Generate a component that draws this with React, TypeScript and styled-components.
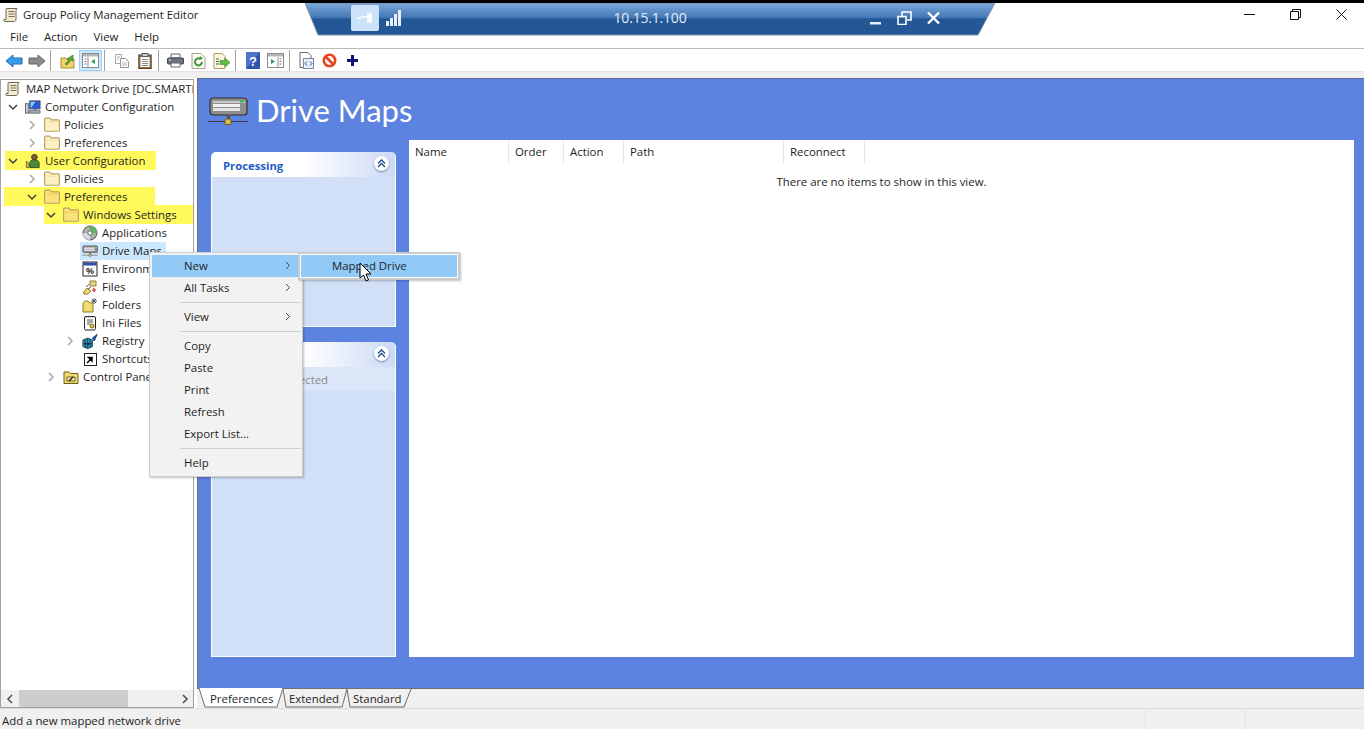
import React from 'react'
import styled, { createGlobalStyle } from 'styled-components'

const UI_FONT = `"Open Sans", "Noto Sans", sans-serif`

const GlobalStyle = createGlobalStyle`
    html, body {
        margin: 0;
        padding: 0;
        background: #fff;
    }
    * {
        box-sizing: border-box;
    }
`

const Page = styled.div`
    position: relative;
    display: flex;
    flex-direction: column;
    width: 1364px;
    height: 729px;
    overflow: hidden;
    background: #fff;
    border-top: 3px solid #000;
    font-family: ${UI_FONT};
    font-size: 11.4px;
    color: #1e1e1e;
`

/* ---------- window chrome ---------- */

const TitleBar = styled.div`
    display: flex;
    align-items: center;
    gap: 4px;
    height: 23px;
    padding-left: 3px;
    flex-shrink: 0;
`

const WindowControls = styled.div`
    position: absolute;
    top: 0;
    right: 0;
    display: flex;
`

const WindowButton = styled.div`
    display: flex;
    align-items: center;
    justify-content: center;
    width: 46px;
    height: 22px;
`

const MenuBar = styled.div`
    display: flex;
    align-items: center;
    gap: 16px;
    height: 23px;
    padding: 0 0 1px 10px;
    border-bottom: 1px solid #b9b9b9;
    flex-shrink: 0;
`

const Toolbar = styled.div`
    display: flex;
    align-items: flex-end;
    height: 22px;
    padding-left: 2px;
    flex-shrink: 0;
`

const ToolButton = styled.div<{ $active?: boolean }>`
    display: flex;
    align-items: center;
    justify-content: center;
    width: 23px;
    height: 21px;
    background: ${p => (p.$active ? '#cce8ff' : 'transparent')};
    border: 1px solid ${p => (p.$active ? '#99d1ff' : 'transparent')};
`

const ToolSep = styled.div`
    width: 8px;
    height: 21px;
    flex-shrink: 0;
    &::after {
        content: '';
        display: block;
        width: 1px;
        height: 100%;
        margin-left: 2px;
        background: #a0a0a0;
    }
`

const Band = styled.div`
    height: 7px;
    background: #f0f0f0;
    border-top: 1px solid #e3e3e3;
    flex-shrink: 0;
`

/* ---------- remote desktop connection bar ---------- */

const ConnectionBar = styled.div`
    position: absolute;
    top: 0;
    left: 305px;
    display: grid;
    grid-template-columns: 1fr auto 1fr;
    align-items: center;
    width: 690px;
    height: 33px;
    padding: 1px 46px 5px 46px;
    color: #e3ebf6;
    z-index: 5;
`

const BarShape = styled.svg`
    position: absolute;
    top: 0;
    left: 0;
`

const BarLeft = styled.div`
    position: relative;
    display: flex;
    align-items: center;
    gap: 7px;
`

const PinButton = styled.div`
    display: flex;
    align-items: center;
    justify-content: center;
    width: 28px;
    height: 26px;
    background: #cbe2fb;
    border-radius: 2px;
`

const HostName = styled.div`
    position: relative;
    font-size: 14px;
    letter-spacing: -0.2px;
`

const BarRight = styled.div`
    position: relative;
    display: flex;
    justify-content: flex-end;
    align-items: center;
    gap: 14px;
    padding-right: 8px;
`

/* ---------- main area ---------- */

const Main = styled.div`
    display: flex;
    flex: 1;
    min-height: 0;
`

const LeftPane = styled.div`
    display: flex;
    flex-direction: column;
    width: 194px;
    margin-top: 1px;
    border: 1px solid #a0a0a0;
    background: #fff;
    flex-shrink: 0;
`

const Tree = styled.div`
    position: relative;
    isolation: isolate;
    flex: 1;
    overflow: hidden;
    background: #fff;
    white-space: nowrap;
`

const Row = styled.div<{ $depth: number; $mark?: [number, number] }>`
    position: relative;
    display: flex;
    align-items: center;
    height: 18px;
    padding-left: ${p => (p.$depth === 0 ? 4 : 5 + (p.$depth - 1) * 19)}px;
    ${p =>
        p.$mark
            ? `&::before {
                content: '';
                position: absolute;
                z-index: -1;
                top: -1px;
                bottom: 0;
                left: ${p.$mark[0]}px;
                width: ${p.$mark[1]}px;
                background: #fff95c;
            }`
            : ''}
`

const Twist = styled.div`
    display: flex;
    align-items: center;
    justify-content: center;
    width: 14px;
    height: 18px;
    margin-right: 5px;
    flex-shrink: 0;
`

const Node = styled.div<{ $selected?: boolean; $root?: boolean }>`
    display: flex;
    align-items: center;
    gap: ${p => (p.$root ? 5 : 4)}px;
    height: 18px;
    margin-left: ${p => (p.$selected ? -2 : 0)}px;
    padding: ${p => (p.$selected ? '0 4px 0 2px' : '0')};
    background: ${p => (p.$selected ? '#cce8ff' : 'transparent')};
`

const NodeLabel = styled.span`
    margin-bottom: 2px;
`

const HScroll = styled.div`
    display: flex;
    align-items: center;
    height: 17px;
    background: #f0f0f0;
    flex-shrink: 0;
`

const ScrollArrow = styled.div`
    display: flex;
    align-items: center;
    justify-content: center;
    width: 17px;
    height: 17px;
`

const ScrollTrack = styled.div`
    flex: 1;
    height: 17px;
`

const ScrollThumb = styled.div`
    width: 109px;
    height: 17px;
    margin-left: 1px;
    background: #cdcdcd;
`

const RightPane = styled.div`
    display: flex;
    flex-direction: column;
    flex: 1;
    min-width: 0;
    margin-left: 3px;
`

const BluePanel = styled.div`
    display: flex;
    flex-direction: column;
    flex: 1;
    min-height: 0;
    background: #5c83df;
    border-top: 1px solid #5a6a90;
    border-left: 1px solid #6d6d6d;
    padding: 0 10px 31px 13px;
`

const Heading = styled.div`
    display: flex;
    align-items: center;
    gap: 8px;
    height: 61px;
    margin-left: -3px;
    flex-shrink: 0;
`

const HeadingIcon = styled.div`
    display: flex;
    margin-top: 2px;
`

const HeadingText = styled.h1`
    margin: 0;
    font-family: Lato, "Open Sans", sans-serif;
    font-size: 31px;
    font-weight: 400;
    color: #fff;
`

const Columns = styled.div`
    display: flex;
    flex: 1;
    min-height: 0;
    gap: 13px;
`

const TaskColumn = styled.div`
    display: flex;
    flex-direction: column;
    gap: 15px;
    width: 185px;
    padding-top: 12px;
    flex-shrink: 0;
`

const TaskCard = styled.div<{ $grow?: boolean }>`
    display: flex;
    flex-direction: column;
    flex: ${p => (p.$grow ? 1 : 'none')};
    height: ${p => (p.$grow ? 'auto' : '175px')};
    background: #d1dff7;
    border: solid #fff;
    border-width: 0 1px 1px 1px;
    border-radius: 5px 5px 0 0;
`

const TaskHeader = styled.div`
    display: flex;
    align-items: center;
    justify-content: space-between;
    height: 25px;
    padding: 2px 6px 0 11px;
    background: linear-gradient(90deg, #fff 0%, #fff 50%, #cbdaf5 100%);
    border-radius: 5px 5px 0 0;
    font-size: 11.3px;
    font-weight: 700;
    color: #215dc6;
    flex-shrink: 0;
`

const Collapse = styled.div`
    display: flex;
    align-items: center;
    justify-content: center;
    width: 15px;
    height: 15px;
    margin-top: -4px;
    background: #fff;
    border-radius: 50%;
    box-shadow: 0 1px 2px rgba(40, 60, 110, 0.55);
`

const TaskNote = styled.div`
    display: flex;
    align-items: center;
    height: 24px;
    padding-left: 11px;
    background: #dbe6f8;
    color: #8b8b8b;
`

const ListView = styled.div`
    flex: 1;
    min-width: 0;
    background: #fff;
`

const ListHeader = styled.div`
    display: flex;
    height: 24px;
`

const ColumnHead = styled.div<{ $w: number }>`
    display: flex;
    align-items: center;
    width: ${p => p.$w}px;
    padding: 0 0 2px 6px;
    border-right: 1px solid #e5e5e5;
`

const EmptyNote = styled.div`
    margin-top: 10px;
    text-align: center;
`

/* ---------- tabs and status ---------- */

const TabStrip = styled.div`
    display: flex;
    height: 20px;
    padding-left: 2px;
    background: #f0f0f0;
    border-top: 1px solid #707070;
    flex-shrink: 0;
`

const Tab = styled.div<{ $w: number; $pad: number; $active?: boolean }>`
    position: relative;
    display: flex;
    align-items: center;
    width: ${p => p.$w}px;
    height: ${p => (p.$active ? 20 : 19)}px;
    margin-top: ${p => (p.$active ? -1 : 0)}px;
    padding-left: ${p => p.$pad}px;
    flex-shrink: 0;
`

const TabLabel = styled.span`
    position: relative;
`

const TabShape = styled.svg`
    position: absolute;
    top: 0;
    left: 0;
`

const StatusBar = styled.div`
    display: flex;
    align-items: center;
    height: 21px;
    background: #f0f0f0;
    border-top: 1px solid #dcdcdc;
    flex-shrink: 0;
`

const StatusText = styled.div`
    flex: 1;
    padding: 2px 0 0 2px;
`

const StatusCell = styled.div`
    width: 100px;
    height: 100%;
    border-left: 1px solid #e4e4e4;
    &:last-child {
        width: 119px;
    }
`

/* ---------- context menu ---------- */

const Menu = styled.div<{ $left: number; $top: number; $w: number }>`
    position: absolute;
    left: ${p => p.$left}px;
    top: ${p => p.$top}px;
    width: ${p => p.$w}px;
    padding: 2px;
    background: #f2f2f2;
    border: 1px solid #cccccc;
    box-shadow: 1px 1px 2px rgba(0, 0, 0, 0.25);
    z-index: 10;
`

const SubMenu = styled(Menu)`
    border-width: 2px;
    padding: 1px;
    background: #fff;
    z-index: 11;
`

const MenuItem = styled.div<{ $hot?: boolean; $over?: boolean; $indent: number }>`
    display: flex;
    align-items: center;
    justify-content: space-between;
    height: 22px;
    margin-right: ${p => (p.$over ? -3 : 0)}px;
    padding: 0 ${p => (p.$over ? 12 : 9)}px 2px ${p => p.$indent}px;
    background: ${p => (p.$hot ? '#91c9f7' : 'transparent')};
`

const MenuSep = styled.div`
    height: 1px;
    margin: 3px -1px 3px 28px;
    background: #cfcfcf;
`

const Pointer = styled.svg`
    position: absolute;
    left: 359px;
    top: 259px;
    z-index: 12;
`

/* ---------- drawings ---------- */

const Chevron = ({ open, dim }: { open?: boolean; dim?: boolean }) => (
    <svg width="10" height="10" viewBox="0 0 10 10">
        <path
            d={open ? 'M1 3l4 4 4-4' : 'M3 1l4 4-4 4'}
            fill="none"
            stroke={dim ? '#a6a6a6' : '#404040'}
            strokeWidth="1.5"
        />
    </svg>
)

const Scroll = () => (
    <svg width="16" height="16" viewBox="0 0 16 16">
        <path d="M4 1.5h10c-1 1-1 2-1 3v8c0 1-1 2-2 2H2c-1 0-1.500-1-1-2h2V3c0-1 0-1.500 1-1.500z" fill="#f2e9cf" stroke="#6e675a" />
        <path d="M5.500 4.500h6M5.500 7h6M5.500 9.500h6" stroke="#77705f" />
    </svg>
)

const Computer = () => (
    <svg width="16" height="16" viewBox="0 0 17 16">
        <rect x="0.500" y="4.500" width="3.500" height="10" fill="#c9cdd6" stroke="#5c6270" />
        <rect x="5" y="1.500" width="11" height="8.500" fill="#2a5bd2" stroke="#47506a" />
        <path d="M6 2.500h5l-4 6H6z" fill="#8fc2ff" />
        <path d="M5 12h11v2.500H5z" fill="#b8bcc6" stroke="#5c6270" />
        <path d="M9 10h3v2H9z" fill="#7a8090" />
    </svg>
)

const UserIcon = () => (
    <svg width="16" height="16" viewBox="0 0 17 16">
        <circle cx="10" cy="4" r="3" fill="#8a5a2e" stroke="#3f3a20" />
        <path d="M5 15V10c0-2 2-3 5-3s5 1 5 3v5z" fill="#4f8a3a" stroke="#2f4f26" />
        <path d="M1.500 8l2.500 2.500V15H1.500z" fill="#d9c65a" stroke="#6e6a2a" />
    </svg>
)

const Folder = ({ open }: { open?: boolean }) => (
    <svg width="16" height="16" viewBox="1 1.5 14 14">
        <path
            d="M1.500 3.500c0-.6.4-1 1-1h3.500l1.500 1.500h6c.6 0 1 .4 1 1v8c0 .6-.4 1-1 1h-11c-.6 0-1-.4-1-1z"
            fill={open ? '#fbe27c' : '#fdf0c4'}
            stroke="#b9a265"
        />
        <path d="M2 6h12" stroke={open ? '#f4cd55' : '#f3dfa0'} />
    </svg>
)

const AppsIcon = () => (
    <svg width="16" height="16" viewBox="0 0 16 16">
        <circle cx="8" cy="8" r="7" fill="#a8b0a8" stroke="#555" />
        <path d="M8 1a7 7 0 0 1 7 7H8z" fill="#5fb55f" />
        <path d="M8 15a7 7 0 0 1-7-7h7z" fill="#d8d8e8" />
        <circle cx="8" cy="8" r="2.200" fill="#fff" stroke="#666" />
    </svg>
)

const DriveIcon = ({ w, h }: { w: number; h: number }) => (
    <svg width={w} height={h} viewBox="0 0 40 28">
        <path d="M5 1h30c2 0 4 1 4 3v11c0 2-1 3-3 3H6c-2 0-4-1-4-3V5c0-2 1-4 3-4z" fill="#8e8e8e" stroke="#2f2f2f" strokeWidth="1.200" />
        <path d="M5 4h32v2H5z" fill="#c9c9c9" />
        <path d="M5 7h27v3H5z" fill="#f2f2f2" />
        <path d="M5 11h27v3H5z" fill="#e4e4e4" />
        <rect x="32" y="3.500" width="4" height="2" fill="#2fbf4a" />
        <path d="M19 18h3v5h-3z" fill="#555" />
        <path d="M0 24.500h40" stroke="#3a3a3a" strokeWidth="1.200" />
        <rect x="17" y="22" width="6" height="5.500" rx="1" fill="#d9bc45" stroke="#6e5a1a" />
    </svg>
)

const EnvIcon = () => (
    <svg width="16" height="16" viewBox="0 0 16 16">
        <rect x="1" y="1" width="14" height="14" fill="#fff" stroke="#222" />
        <rect x="1.500" y="1.500" width="13" height="3" fill="#2d4fa8" />
        <text x="8" y="13" textAnchor="middle" fontSize="9" fontWeight="700" fontFamily="Liberation Sans" fill="#111">%</text>
    </svg>
)

const FilesIcon = () => (
    <svg width="16" height="16" viewBox="0 0 16 16">
        <path d="M1 14l4-5 4 3-3 3H2z" fill="#ecd976" stroke="#8f7e2a" />
        <path d="M8 2h6v5H8z" fill="#e7d684" stroke="#8f7e2a" />
        <path d="M4 8l3-3M6 10l3-2" stroke="#666" />
        <path d="M10 11h4M12 9v4" stroke="#d22" strokeWidth="1.200" />
    </svg>
)

const FoldersIcon = () => (
    <svg width="16" height="16" viewBox="0 0 16 16">
        <path d="M1 6l2-2h3l2 2h3v9H1z" fill="#efdc6e" stroke="#8f7e2a" />
        <path d="M12 1v6M9 4h6M10 2l4 4M14 2l-4 4" stroke="#5a5a5a" />
    </svg>
)

const IniIcon = () => (
    <svg width="16" height="16" viewBox="0 0 16 16">
        <rect x="2.500" y="1.500" width="11" height="13.500" rx="1.500" fill="#fff" stroke="#222" />
        <path d="M4 2h8" stroke="#555" strokeDasharray="1 1" />
        <path d="M5 5h6M5 7h6M5 9h3" stroke="#555" />
        <circle cx="10" cy="11" r="2" fill="#e5c53a" stroke="#7d6a18" />
    </svg>
)

const RegistryIcon = () => (
    <svg width="16" height="16" viewBox="0 0 17 16">
        <path d="M1 7l5-2 5 2v7l-5 2-5-2z" fill="#2f9aa8" stroke="#123c66" />
        <path d="M6 5v11M1 10.500l5 1.500 5-1.500M3.500 6v9M8.500 6v9" stroke="#123c66" />
        <path d="M11 5l5-4-3 7z" fill="#2458b8" stroke="#123c66" />
    </svg>
)

const ShortcutIcon = () => (
    <svg width="16" height="16" viewBox="0 0 16 16">
        <rect x="2.500" y="2.500" width="12" height="12" fill="#fff" stroke="#222" />
        <path d="M5 12l4-4M6.500 6.500H10V10z" stroke="#000" strokeWidth="1.500" fill="#000" />
    </svg>
)

const ControlPanelIcon = () => (
    <svg width="16" height="16" viewBox="0 0 16 16">
        <path d="M1 3h5l1.500 1.500h7.500v10H1z" fill="#efdc6e" stroke="#6e5f1a" />
        <path d="M4 8h8v4H4z" fill="#fff6c4" stroke="#6e5f1a" />
        <path d="M6 12l4-4" stroke="#222" strokeWidth="1.500" />
    </svg>
)

const toolIcons: Record<string, React.ReactNode> = {
    back: (
        <svg width="18" height="14" viewBox="0 0 18 14">
            <path d="M1 7l7-6v3h9v6H8v3z" fill="#3c9be8" stroke="#1e6fb8" />
        </svg>
    ),
    forward: (
        <svg width="18" height="14" viewBox="0 0 18 14">
            <path d="M17 7l-7-6v3H1v6h9v3z" fill="#8c8c8c" stroke="#666" />
        </svg>
    ),
    up: (
        <svg width="16" height="16" viewBox="0 0 16 16">
            <path d="M1 5h5l1 1h7v9H1z" fill="#f2d36a" stroke="#a88d34" />
            <path d="M5 11l4-4-2-1 6-4v6l-2-1-4 5z" fill="#4fa83a" stroke="#2f7022" strokeWidth=".6" />
        </svg>
    ),
    tree: (
        <svg width="17" height="15" viewBox="0 0 17 15">
            <rect x=".5" y=".5" width="16" height="14" fill="#fff" stroke="#8a8a8a" />
            <path d="M1 1h15v2.500H1z" fill="#b5b5b5" />
            <path d="M6 4v10" stroke="#8a8a8a" />
            <path d="M2.500 6h2M2.500 8.500h2M2.500 11h2" stroke="#777" />
            <path d="M13 6v5l-4-2.500z" fill="#2f9a55" />
        </svg>
    ),
    copy: (
        <svg width="16" height="16" viewBox="0 0 16 16">
            <path d="M1.500 1.500h6v9h-6z" fill="#fff" stroke="#a8a8a8" />
            <path d="M6.500 5.500h5l3 3v6h-8z" fill="#fff" stroke="#969696" />
            <path d="M3 4h3M3 6h2M8 10h5M8 12h5" stroke="#b5b5b5" />
        </svg>
    ),
    paste: (
        <svg width="14" height="16" viewBox="0 0 14 16">
            <rect x=".8" y="2" width="12.400" height="13.500" fill="#96704a" stroke="#5f4428" />
            <rect x="2.500" y="4" width="9" height="10" fill="#fff" />
            <rect x="4" y=".5" width="6" height="3" fill="#ccc" stroke="#555" />
            <path d="M4 6.500h6M4 8.500h6M4 10.500h6M4 12.500h6" stroke="#8a8a8a" />
        </svg>
    ),
    print: (
        <svg width="17" height="15" viewBox="0 0 17 15">
            <path d="M4 1h9v4H4z" fill="#fff" stroke="#666" />
            <rect x=".5" y="5" width="16" height="6" rx="1" fill="#6e7480" stroke="#3f444e" />
            <path d="M4 10h9v4H4z" fill="#fff" stroke="#666" />
            <path d="M2 7h2" stroke="#e8e8e8" />
        </svg>
    ),
    refresh: (
        <svg width="15" height="16" viewBox="0 0 15 16">
            <path d="M1 .5h9l4 4v11H1z" fill="#fbfbf4" stroke="#a0a090" />
            <path d="M11 9a3.500 3.500 0 1 1-1.500-3" fill="none" stroke="#3a9a3a" strokeWidth="2" />
            <path d="M9 3l3 2.500-3.500 1.500z" fill="#3a9a3a" />
        </svg>
    ),
    exportList: (
        <svg width="18" height="16" viewBox="0 0 18 16">
            <path d="M1 .5h8l3 3v12H1z" fill="#fdf8e0" stroke="#a89a60" />
            <path d="M3 6h3M3 8.500h3M3 11h3" stroke="#555" />
            <path d="M7 7.500h5V5l5 4.500-5 4.500v-2.500H7z" fill="#63b83f" stroke="#3d8a26" strokeWidth=".6" />
        </svg>
    ),
    help: (
        <svg width="14" height="17" viewBox="0 0 14 17">
            <rect width="14" height="17" fill="#2f55b0" />
            <path d="M0 0h14L0 17z" fill="#4f74cc" />
            <text x="7" y="13.500" textAnchor="middle" fontSize="13" fontWeight="700" fontFamily="Liberation Sans" fill="#fff">?</text>
        </svg>
    ),
    panel: (
        <svg width="17" height="15" viewBox="0 0 17 15">
            <rect x=".5" y=".5" width="16" height="14" fill="#fff" stroke="#8a8a8a" />
            <path d="M1 1h15v2.500H1z" fill="#b5b5b5" />
            <path d="M11 4v10" stroke="#8a8a8a" />
            <path d="M12.500 6h2M12.500 8.500h2M12.500 11h2" stroke="#777" />
            <path d="M4 6v5l4-2.500z" fill="#2f9a55" />
        </svg>
    ),
    xml: (
        <svg width="15" height="17" viewBox="0 0 15 17">
            <path d="M1 .5h8l3 3v4M1 .5v15h4" fill="#fff" stroke="#666" />
            <rect x="4.500" y="6.500" width="10" height="10" fill="#eaf0fa" stroke="#7a8ab0" />
            <path d="M8 9.500l-2 2 2 2M11 9.500l2 2-2 2" fill="none" stroke="#234a9a" />
        </svg>
    ),
    stop: (
        <svg width="15" height="15" viewBox="0 0 15 15">
            <circle cx="7.500" cy="7.500" r="5.700" fill="#fff" stroke="#e3461c" strokeWidth="2.600" />
            <path d="M3.500 3.500l8 8" stroke="#e3461c" strokeWidth="2.600" />
        </svg>
    ),
    plus: (
        <svg width="11" height="11" viewBox="0 0 11 11">
            <path d="M4 0h3v4h4v3H7v4H4V7H0V4h4z" fill="#10107a" />
        </svg>
    ),
}

const toolLayout = [
    'back', 'forward', '|', 'up', 'tree', '|', 'copy', 'paste', '|',
    'print', 'refresh', 'exportList', '|', 'help', 'panel', '|', 'xml', 'stop', 'plus',
]

const treeRows: {
    label: string
    depth: number
    icon: React.ReactNode
    twist?: 'open' | 'closed'
    mark?: [number, number]
    selected?: boolean
}[] = [
    { label: 'MAP Network Drive [DC.SMARTLAB.LOCAL] Policy', depth: 0, icon: <Scroll /> },
    { label: 'Computer Configuration', depth: 1, icon: <Computer />, twist: 'open' },
    { label: 'Policies', depth: 2, icon: <Folder />, twist: 'closed' },
    { label: 'Preferences', depth: 2, icon: <Folder />, twist: 'closed' },
    { label: 'User Configuration', depth: 1, icon: <UserIcon />, twist: 'open', mark: [4, 151] },
    { label: 'Policies', depth: 2, icon: <Folder />, twist: 'closed' },
    { label: 'Preferences', depth: 2, icon: <Folder open />, twist: 'open', mark: [3, 151] },
    { label: 'Windows Settings', depth: 3, icon: <Folder open />, twist: 'open', mark: [43, 150] },
    { label: 'Applications', depth: 4, icon: <AppsIcon /> },
    { label: 'Drive Maps', depth: 4, icon: <DriveIcon w={16} h={14} />, selected: true },
    { label: 'Environment', depth: 4, icon: <EnvIcon /> },
    { label: 'Files', depth: 4, icon: <FilesIcon /> },
    { label: 'Folders', depth: 4, icon: <FoldersIcon /> },
    { label: 'Ini Files', depth: 4, icon: <IniIcon /> },
    { label: 'Registry', depth: 4, icon: <RegistryIcon />, twist: 'closed' },
    { label: 'Shortcuts', depth: 4, icon: <ShortcutIcon /> },
    { label: 'Control Panel Settings', depth: 3, icon: <ControlPanelIcon />, twist: 'closed' },
]

const columns: [string, number][] = [
    ['Name', 100],
    ['Order', 55],
    ['Action', 60],
    ['Path', 160],
    ['Reconnect', 81],
]

const menuItems = ['New>', 'All Tasks>', '-', 'View>', '-', 'Copy', 'Paste', 'Print', 'Refresh', 'Export List...', '-', 'Help']

const DoubleChevron = () => (
    <svg width="9" height="9" viewBox="0 0 9 9">
        <path d="M1 4.500l3.500-3.500 3.500 3.500M1 8l3.500-3.500L8 8" fill="none" stroke="#1e4a8a" strokeWidth="1.300" />
    </svg>
)

const SmallArrow = () => (
    <svg width="6" height="9" viewBox="0 0 6 9">
        <path d="M1 1l3.500 3.500L1 8" fill="none" stroke="#444" />
    </svg>
)

const App = () => {
    return (
        <Page>
            <GlobalStyle />
            <TitleBar>
                <Scroll />
                <span>Group Policy Management Editor</span>
            </TitleBar>
            <WindowControls>
                <WindowButton>
                    <svg width="11" height="11" viewBox="0 0 11 11"><path d="M0 5.500h11" stroke="#111" /></svg>
                </WindowButton>
                <WindowButton>
                    <svg width="11" height="11" viewBox="0 0 11 11">
                        <path d="M.5 2.500h8v8h-8zM2.500 2.500v-2h8v8h-2" fill="none" stroke="#111" />
                    </svg>
                </WindowButton>
                <WindowButton>
                    <svg width="11" height="11" viewBox="0 0 11 11"><path d="M.5.500l10 10M10.500.500l-10 10" stroke="#111" /></svg>
                </WindowButton>
            </WindowControls>

            <ConnectionBar>
                <BarShape width="690" height="33" viewBox="0 0 690 33">
                    <defs>
                        <linearGradient id="barFill" x1="0" y1="0" x2="0" y2="1">
                            <stop offset="0" stopColor="#7ba8da" />
                            <stop offset="0.45" stopColor="#4478b6" />
                            <stop offset="0.5" stopColor="#245795" />
                            <stop offset="1" stopColor="#245795" />
                        </linearGradient>
                    </defs>
                    <path d="M0 0H690L673 32H13Z" fill="url(#barFill)" stroke="#7f8da3" />
                </BarShape>
                <BarLeft>
                    <PinButton>
                        <svg width="16" height="12" viewBox="0 0 16 12">
                            <path d="M0 6h4M4 5h7M11 1v10M14 1v10M11 3h3v6h-3" stroke="#fff" strokeWidth="1.600" fill="#fff" />
                        </svg>
                    </PinButton>
                    <svg width="15" height="16" viewBox="0 0 15 16">
                        <path d="M0 11h3v5H0zM4 8h3v8H4zM8 4h3v12H8zM12 0h3v16h-3z" fill="#e8eef8" />
                    </svg>
                </BarLeft>
                <HostName>10.15.1.100</HostName>
                <BarRight>
                    <svg width="14" height="14" viewBox="0 0 14 14"><path d="M1 11h11v2.500H1z" fill="#e8eef8" /></svg>
                    <svg width="15" height="14" viewBox="0 0 15 14">
                        <path d="M1 5.500h8v8H1zM5 5V1h9v8h-4" fill="none" stroke="#fff" strokeWidth="1.600" />
                    </svg>
                    <svg width="15" height="14" viewBox="0 0 15 14"><path d="M2 1.500l11 11M13 1.500l-11 11" stroke="#fff" strokeWidth="2.400" /></svg>
                </BarRight>
            </ConnectionBar>

            <MenuBar>
                <span>File</span>
                <span>Action</span>
                <span>View</span>
                <span>Help</span>
            </MenuBar>
            <Toolbar>
                {toolLayout.map((name, i) =>
                    name === '|' ? (
                        <ToolSep key={i} />
                    ) : (
                        <ToolButton key={i} $active={name === 'tree'}>
                            {toolIcons[name]}
                        </ToolButton>
                    )
                )}
            </Toolbar>
            <Band />

            <Main>
                <LeftPane>
                    <Tree>
                        {treeRows.map((row, i) => (
                            <Row key={i} $depth={row.depth} $mark={row.mark}>
                                {row.depth > 0 && (
                                    <Twist>
                                        {row.twist && <Chevron open={row.twist === 'open'} dim={row.twist === 'closed'} />}
                                    </Twist>
                                )}
                                <Node $selected={row.selected} $root={row.depth === 0}>
                                    {row.icon}
                                    <NodeLabel>{row.label}</NodeLabel>
                                </Node>
                            </Row>
                        ))}
                    </Tree>
                    <HScroll>
                        <ScrollArrow>
                            <svg width="8" height="10" viewBox="0 0 8 10"><path d="M6 1L2 5l4 4" fill="none" stroke="#505050" strokeWidth="1.600" /></svg>
                        </ScrollArrow>
                        <ScrollTrack>
                            <ScrollThumb />
                        </ScrollTrack>
                        <ScrollArrow>
                            <svg width="8" height="10" viewBox="0 0 8 10"><path d="M2 1l4 4-4 4" fill="none" stroke="#505050" strokeWidth="1.600" /></svg>
                        </ScrollArrow>
                    </HScroll>
                </LeftPane>

                <RightPane>
                    <BluePanel>
                        <Heading>
                            <HeadingIcon><DriveIcon w={40} h={28} /></HeadingIcon>
                            <HeadingText>Drive Maps</HeadingText>
                        </Heading>
                        <Columns>
                            <TaskColumn>
                                <TaskCard>
                                    <TaskHeader>
                                        Processing
                                        <Collapse><DoubleChevron /></Collapse>
                                    </TaskHeader>
                                </TaskCard>
                                <TaskCard $grow>
                                    <TaskHeader>
                                        Selection
                                        <Collapse><DoubleChevron /></Collapse>
                                    </TaskHeader>
                                    <TaskNote>No policies selected</TaskNote>
                                </TaskCard>
                            </TaskColumn>
                            <ListView>
                                <ListHeader>
                                    {columns.map(([name, w]) => (
                                        <ColumnHead key={name} $w={w}>{name}</ColumnHead>
                                    ))}
                                </ListHeader>
                                <EmptyNote>There are no items to show in this view.</EmptyNote>
                            </ListView>
                        </Columns>
                    </BluePanel>
                    <TabStrip>
                        <Tab $w={84} $pad={11} $active>
                            <TabShape width="85" height="20" viewBox="0 0 85 20">
                                <path d="M0 0L6 19H78L84 0" fill="#fff" stroke="#6d6d6d" />
                            </TabShape>
                            <TabLabel>Preferences</TabLabel>
                        </Tab>
                        <Tab $w={64} $pad={6}>
                            <TabShape width="65" height="19" viewBox="0 0 65 19">
                                <path d="M0 0L3 18H59L64 0" fill="#f0f0f0" stroke="#6d6d6d" />
                            </TabShape>
                            <TabLabel>Extended</TabLabel>
                        </Tab>
                        <Tab $w={64} $pad={6}>
                            <TabShape width="65" height="19" viewBox="0 0 65 19">
                                <path d="M0 0L3 18H57L64 0" fill="#f0f0f0" stroke="#6d6d6d" />
                            </TabShape>
                            <TabLabel>Standard</TabLabel>
                        </Tab>
                    </TabStrip>
                </RightPane>
            </Main>

            <StatusBar>
                <StatusText>Add a new mapped network drive</StatusText>
                <StatusCell />
                <StatusCell />
            </StatusBar>

            <Menu $left={149} $top={249} $w={154}>
                {menuItems.map((item, i) => {
                    if (item === '-') return <MenuSep key={i} />
                    const hasSub = item.endsWith('>')
                    return (
                        <MenuItem key={i} $indent={32} $hot={item === 'New>'} $over={item === 'New>'}>
                            {hasSub ? item.slice(0, -1) : item}
                            {hasSub && <SmallArrow />}
                        </MenuItem>
                    )
                })}
            </Menu>
            <SubMenu $left={298} $top={249} $w={162}>
                <MenuItem $indent={31} $hot>Mapped Drive</MenuItem>
            </SubMenu>
            <Pointer width="13" height="20" viewBox="0 0 13 20">
                <path d="M1 1v15l3.500-3 2.500 6 2.500-1-2.500-6h5z" fill="#fff" stroke="#000" />
            </Pointer>
        </Page>
    )
}

export default App
